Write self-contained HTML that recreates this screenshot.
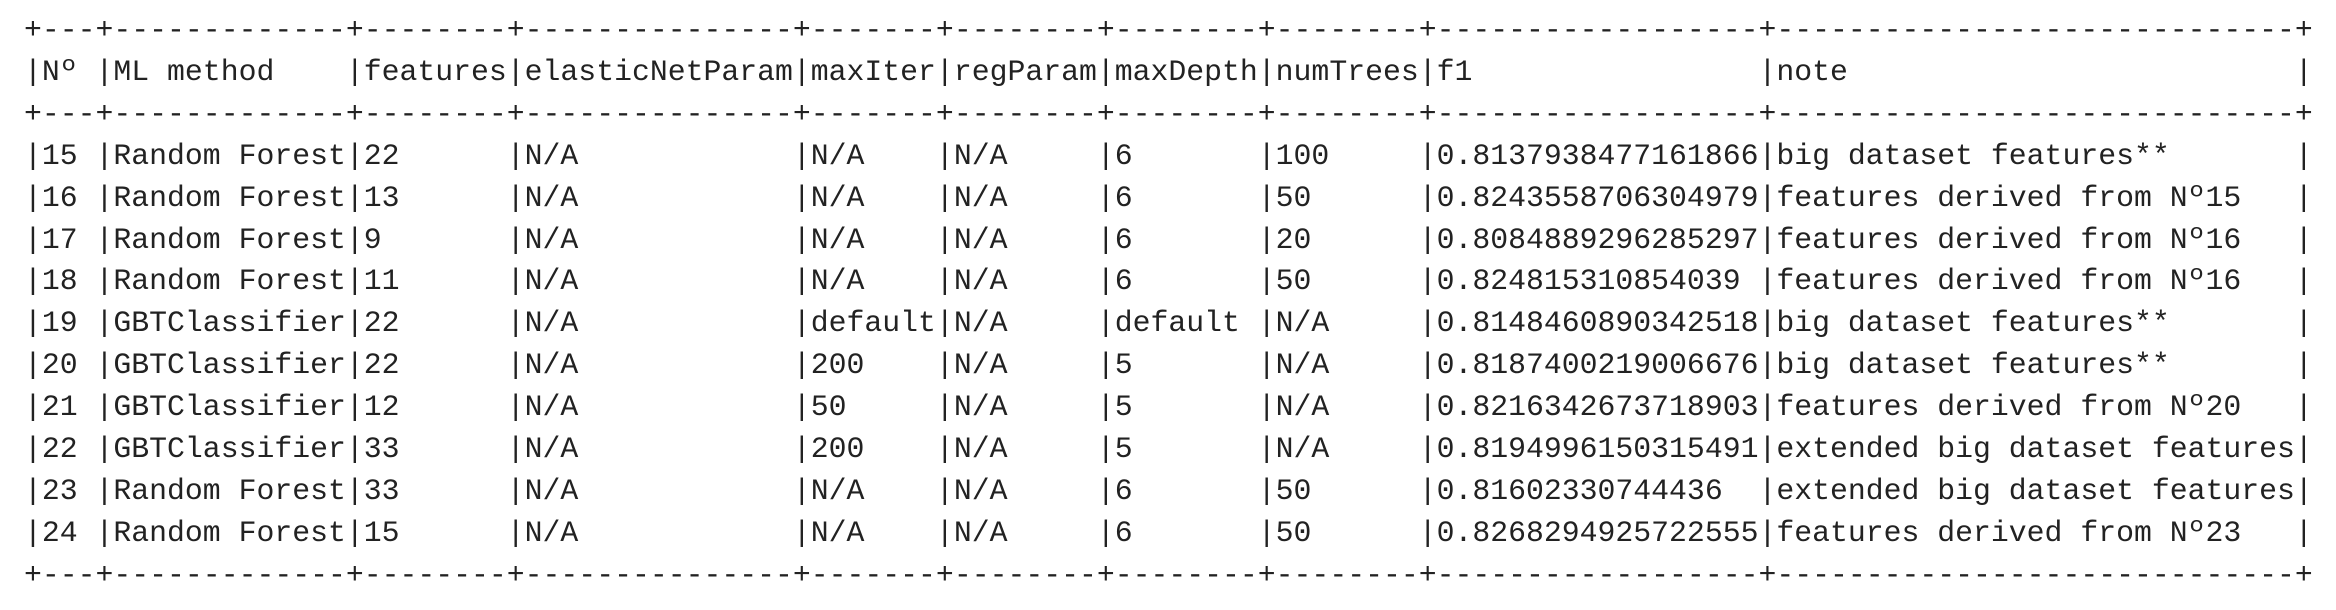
<!DOCTYPE html>
<html><head><meta charset="utf-8"><style>
html,body{margin:0;padding:0;background:#fff;width:2336px;height:610px;overflow:hidden}
pre{position:absolute;left:24px;top:10px;margin:0;font-family:"Liberation Mono",monospace;font-size:29.8px;line-height:41.9px;color:#222;}
</style></head><body><pre>+---+-------------+--------+---------------+-------+--------+--------+--------+------------------+-----------------------------+
|Nº |ML method    |features|elasticNetParam|maxIter|regParam|maxDepth|numTrees|f1                |note                         |
+---+-------------+--------+---------------+-------+--------+--------+--------+------------------+-----------------------------+
|15 |Random Forest|22      |N/A            |N/A    |N/A     |6       |100     |0.8137938477161866|big dataset features**       |
|16 |Random Forest|13      |N/A            |N/A    |N/A     |6       |50      |0.8243558706304979|features derived from Nº15   |
|17 |Random Forest|9       |N/A            |N/A    |N/A     |6       |20      |0.8084889296285297|features derived from Nº16   |
|18 |Random Forest|11      |N/A            |N/A    |N/A     |6       |50      |0.824815310854039 |features derived from Nº16   |
|19 |GBTClassifier|22      |N/A            |default|N/A     |default |N/A     |0.8148460890342518|big dataset features**       |
|20 |GBTClassifier|22      |N/A            |200    |N/A     |5       |N/A     |0.8187400219006676|big dataset features**       |
|21 |GBTClassifier|12      |N/A            |50     |N/A     |5       |N/A     |0.8216342673718903|features derived from Nº20   |
|22 |GBTClassifier|33      |N/A            |200    |N/A     |5       |N/A     |0.8194996150315491|extended big dataset features|
|23 |Random Forest|33      |N/A            |N/A    |N/A     |6       |50      |0.81602330744436  |extended big dataset features|
|24 |Random Forest|15      |N/A            |N/A    |N/A     |6       |50      |0.8268294925722555|features derived from Nº23   |
+---+-------------+--------+---------------+-------+--------+--------+--------+------------------+-----------------------------+</pre></body></html>
